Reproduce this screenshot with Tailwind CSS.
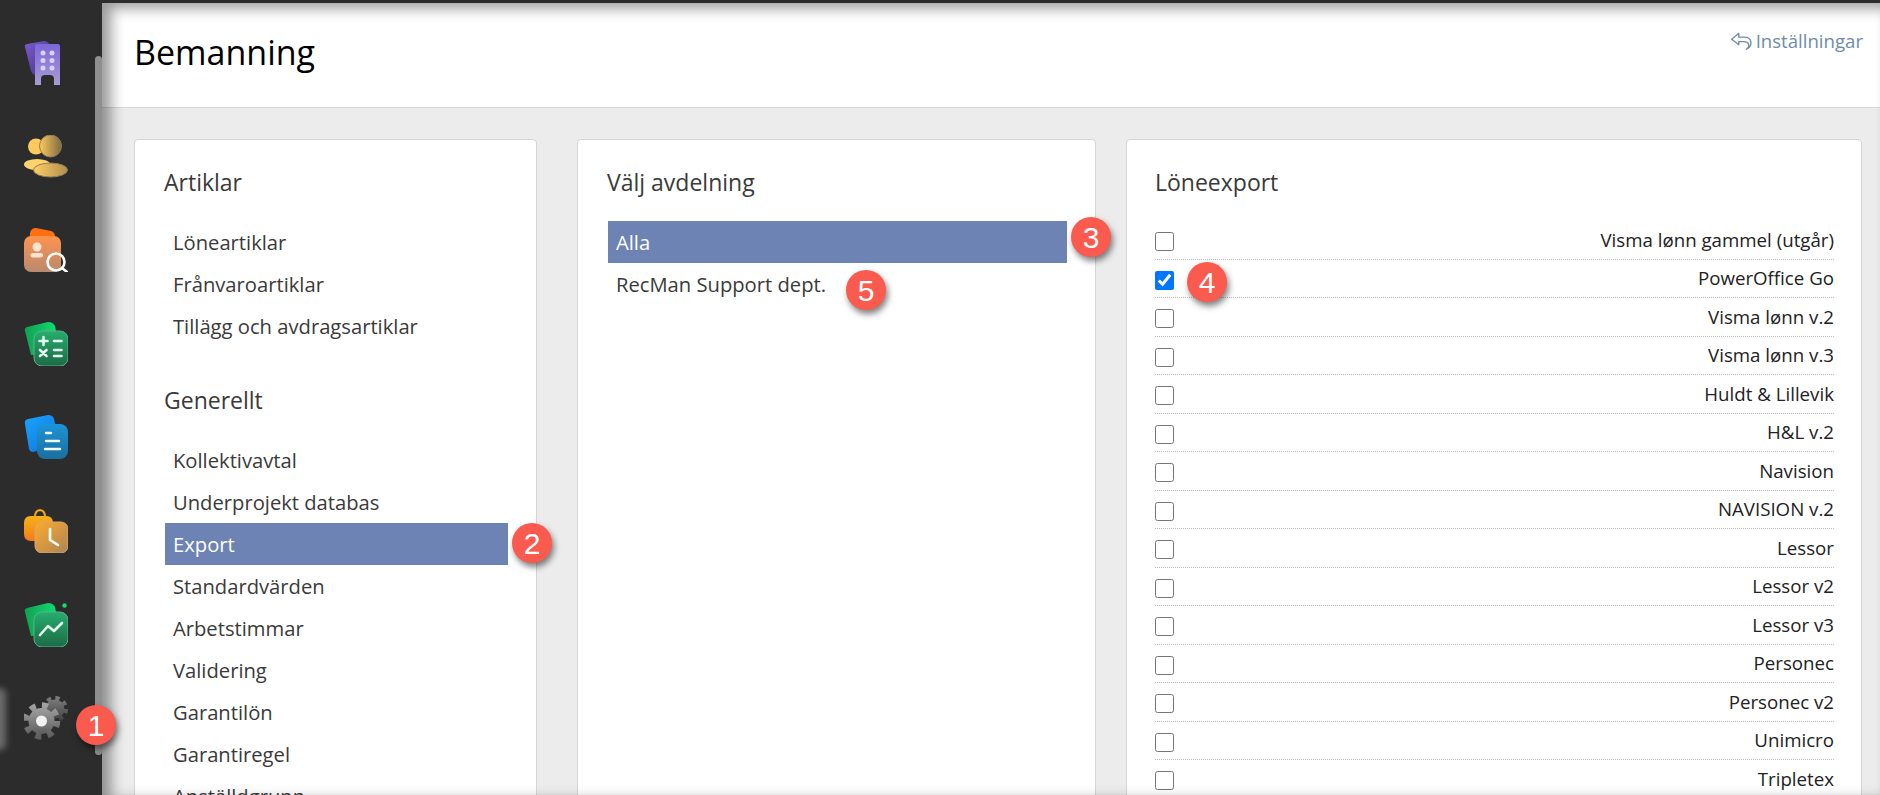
<!DOCTYPE html>
<html lang="sv">
<head>
    <meta charset="UTF-8" />
    <title>Bemanning</title>
    <script src="https://cdn.jsdelivr.net/npm/@tailwindcss/browser@4"></script>
</head>
<body class="h-[795px] overflow-hidden bg-[#2c2c2c] [font-family:'Open_Sans',sans-serif] text-[#3a3a3a]">

<!-- shared gradients for the sidebar icons -->
<svg width="0" height="0" class="absolute">
    <defs>
        <linearGradient id="purpleBack" x1="0" y1="0" x2="1" y2="1"><stop offset="0" stop-color="#7a5cd0"/><stop offset="1" stop-color="#43307f"/></linearGradient>
        <linearGradient id="purpleFront" x1="0" y1="0" x2="0" y2="1"><stop offset="0" stop-color="#7c68d6"/><stop offset="1" stop-color="#a99bd6"/></linearGradient>
        <linearGradient id="coin" x1="0" y1="0" x2="1" y2="0"><stop offset="0" stop-color="#ffc95c"/><stop offset="1" stop-color="#7d6a45"/></linearGradient>
        <linearGradient id="coinFlat" x1="0" y1="0" x2="1" y2="0"><stop offset="0" stop-color="#ffce66"/><stop offset="1" stop-color="#b08f4e"/></linearGradient>
        <linearGradient id="orangeFront" x1="0" y1="0" x2="0" y2="1"><stop offset="0" stop-color="#ff934d"/><stop offset="1" stop-color="#b98a70"/></linearGradient>
        <linearGradient id="greenBack" x1="0" y1="0" x2="1" y2="0"><stop offset="0" stop-color="#12a050"/><stop offset="1" stop-color="#0ae676"/></linearGradient>
        <linearGradient id="greenFront" x1="0" y1="0" x2="0" y2="1"><stop offset="0" stop-color="#27ad6e"/><stop offset="1" stop-color="#1c6b46"/></linearGradient>
        <linearGradient id="blueBack" x1="0" y1="0" x2="1" y2="1"><stop offset="0" stop-color="#1aa5ff"/><stop offset="1" stop-color="#0f6fd8"/></linearGradient>
        <linearGradient id="blueFront" x1="0" y1="0" x2="0" y2="1"><stop offset="0" stop-color="#1c94d8"/><stop offset="1" stop-color="#1a6f9e"/></linearGradient>
        <linearGradient id="bagBack" x1="0" y1="0" x2="0" y2="1"><stop offset="0" stop-color="#f7b216"/><stop offset="1" stop-color="#f57a1a"/></linearGradient>
        <linearGradient id="bagFront" x1="0" y1="0" x2="1" y2="1"><stop offset="0" stop-color="#ffaa2c"/><stop offset="1" stop-color="#ab8559"/></linearGradient>
        <linearGradient id="gearBack" x1="0" y1="0" x2="0" y2="1"><stop offset="0" stop-color="#7a7a7a"/><stop offset="1" stop-color="#454545"/></linearGradient>
        <linearGradient id="gearFront" x1="0" y1="0" x2="0" y2="1"><stop offset="0" stop-color="#a0a0a0"/><stop offset="1" stop-color="#5e5e5e"/></linearGradient>
    </defs>
</svg>

<div class="flex h-full">

    <!-- Sidebar -->
    <aside class="relative w-[102px] shrink-0 bg-[#2c2c2c]">
        <div class="flex flex-col gap-[49.6px] pl-6 pt-[41px]">
            <svg class="w-11 h-11" viewBox="0 0 44 44">
                <path d="M1 6 Q0 4 3 3 L20 0 Q24 0 25 3 L27 26 L11 34 Q8 33 7 30 Z" fill="url(#purpleBack)"/>
                <path d="M11 5 Q11 3 13 3 L34 3 Q36 3 36 5 L36 44 L30 44 L30 38 Q30 34 26 34 L21 34 Q17 34 17 38 L17 44 L11 44 Z" fill="url(#purpleFront)"/>
                <g fill="#d9d2f5"><circle cx="19" cy="12" r="2.5"/><circle cx="28" cy="12" r="2.5"/><circle cx="19" cy="19.5" r="2.5"/><circle cx="28" cy="19.5" r="2.5"/><circle cx="19" cy="27" r="2.5"/><circle cx="28" cy="27" r="2.5"/></g>
            </svg>
            <svg class="w-11 h-11" viewBox="0 0 44 44">
                <circle cx="12" cy="11.5" r="8" fill="#ffc95c"/>
                <circle cx="26.5" cy="11" r="11" fill="url(#coin)" stroke="#8f7d59" stroke-width="1"/>
                <ellipse cx="13" cy="29.5" rx="13" ry="5.5" fill="#ffd26c"/>
                <ellipse cx="26.5" cy="35" rx="17" ry="7" fill="url(#coinFlat)" stroke="#8f7d59" stroke-width="1"/>
            </svg>
            <svg class="w-11 h-11" viewBox="0 0 44 44">
                <path d="M6 5 Q7 0 12 0 L27 3 Q31 4 31 9 L6 9 Z" fill="#ff6f0f"/>
                <rect x="0" y="8" width="37" height="36" rx="7" fill="url(#orangeFront)"/>
                <circle cx="13" cy="19" r="4.5" fill="#ffe3d2"/>
                <rect x="6.5" y="25" width="12.5" height="4.5" rx="2.2" fill="#ffe3d2"/>
                <circle cx="32" cy="34" r="8.5" fill="none" stroke="#fff" stroke-width="2.6"/>
                <path d="M38 40 L43 44" stroke="#fff" stroke-width="2.6" stroke-linecap="round"/>
            </svg>
            <svg class="w-11 h-11" viewBox="0 0 44 44">
                <path d="M1 9 Q0 6 3 5 L24 0 Q29 0 31 4 L36 30 L7 33 Z" fill="url(#greenBack)"/>
                <rect x="10" y="9" width="34" height="35" rx="8" fill="url(#greenFront)" stroke="#5fae8b" stroke-width="1"/>
                <g stroke="#e5f7ee" stroke-width="2.6" stroke-linecap="round">
                    <path d="M15.5 19 H23.5 M19.5 15 V23"/>
                    <path d="M30 19 H37.5"/>
                    <path d="M16 28 L22.5 34 M22.5 28 L16 34"/>
                    <path d="M30 28 H37.5 M30 34 H37.5"/>
                </g>
            </svg>
            <svg class="w-11 h-11" viewBox="0 0 44 44">
                <path d="M1 9 Q0 5 4 4 L24 0 Q29 0 30 4 L36 30 L9 37 Q6 37 5 34 Z" fill="url(#blueBack)"/>
                <rect x="13" y="9" width="31" height="35" rx="8" fill="url(#blueFront)"/>
                <g stroke="#f2fbff" stroke-width="2.4" stroke-linecap="round">
                    <path d="M22 18 H27"/>
                    <path d="M22 26 H35"/>
                    <path d="M21 34 H36"/>
                </g>
            </svg>
            <svg class="w-11 h-11" viewBox="0 0 44 44">
                <path d="M11 8 Q11 1.5 16 1 Q21 1.5 21 8" fill="none" stroke="#f0a818" stroke-width="2"/>
                <path d="M0 14 Q0 7 7 7 L22 7 Q29 7 29 14 L30 32 L7 32 Q0 32 0 25 Z" fill="url(#bagBack)"/>
                <rect x="11" y="13" width="33" height="31" rx="7" fill="url(#bagFront)" stroke="#d0a878" stroke-width="1"/>
                <path d="M26 20 V31 L34 36" fill="none" stroke="#fff" stroke-width="2.6" stroke-linecap="round" stroke-linejoin="round"/>
            </svg>
            <svg class="w-11 h-11" viewBox="0 0 44 44">
                <path d="M1 9 Q0 6 3 5 L24 0 Q29 0 31 4 L36 30 L7 33 Z" fill="url(#greenBack)"/>
                <circle cx="40.5" cy="2.5" r="2.2" fill="#0ee06f"/>
                <rect x="10" y="9" width="34" height="35" rx="8" fill="url(#greenFront)" stroke="#5fae8b" stroke-width="1"/>
                <path d="M16 32 L24 23 L30 28 L38 20" fill="none" stroke="#e5f7ee" stroke-width="2.6" stroke-linecap="round" stroke-linejoin="round"/>
            </svg>
            <svg class="w-11 h-11" viewBox="0 0 44 44">
                <circle cx="31" cy="13" r="9.5" fill="url(#gearBack)"/>
                <circle cx="31" cy="13" r="10.5" fill="none" stroke="url(#gearBack)" stroke-width="5" stroke-dasharray="4.1 4.15"/>
                <circle cx="17.5" cy="25" r="13" fill="url(#gearFront)"/>
                <circle cx="17.5" cy="25" r="15.5" fill="none" stroke="url(#gearFront)" stroke-width="6.5" stroke-dasharray="6 6.17"/>
                <circle cx="17.5" cy="25" r="5.5" fill="#f2f2f2"/>
            </svg>
        </div>

        <!-- scrollbar thumb and hover glow -->
        <div class="absolute left-[95px] top-[56px] h-[699px] w-[7px] rounded-t-md rounded-b-md bg-[#8f8f8f]"></div>
        <div class="absolute left-[-12px] top-[688px] h-[62px] w-[18px] rounded-md bg-[#6a6a6a] blur-[3px]"></div>
    </aside>

    <!-- Main -->
    <main class="relative flex-1 min-w-0 bg-[#ececec] border-t-[3px] border-[#2c2c2c]">
        <header class="flex h-[105px] justify-between border-b border-[#d8d8d8] bg-white pl-8 pr-[17px]">
            <h1 class="pt-[27px] text-[34px] leading-[44px] text-black">Bemanning</h1>
            <a class="flex h-[76px] items-center gap-1 text-[18.6px] text-[#6f8ba8]">
                <svg class="w-[22px] h-[22px]" viewBox="0 0 20 20" fill="none" stroke="#6f8ba8" stroke-width="1.2" stroke-linejoin="round" stroke-linecap="round">
                    <path d="M8 3 L1.5 8.5 L8 13.5 V10.5 H12.5 Q16 10.5 17 13 Q17.5 15.5 15 17.5 Q19.5 15.5 19 11 Q18.5 6.5 13 6.5 H8 Z"/>
                </svg>
                Inställningar
            </a>
        </header>

        <div class="flex items-start gap-10 pl-8 pt-[31px]">

            <!-- Artiklar / Generellt -->
            <section class="w-[403px] shrink-0 rounded border border-[#d5d5d5] bg-white pl-[29px] pr-[27px] pt-[28px] pb-10">
                <h2 class="mb-[25px] text-[23px] leading-[28px]">Artiklar</h2>
                <ul class="mx-[1px] text-[20.2px]">
                    <li class="flex h-[42px] items-center px-2">Löneartiklar</li>
                    <li class="flex h-[42px] items-center px-2">Frånvaroartiklar</li>
                    <li class="flex h-[42px] items-center px-2">Tillägg och avdragsartiklar</li>
                </ul>
                <h2 class="mb-[25px] mt-[39px] text-[23px] leading-[28px]">Generellt</h2>
                <ul class="mx-[1px] text-[20.2px]">
                    <li class="flex h-[42px] items-center px-2">Kollektivavtal</li>
                    <li class="flex h-[42px] items-center px-2">Underprojekt databas</li>
                    <li class="flex h-[42px] items-center bg-[#6d83b4] px-2 text-white">Export</li>
                    <li class="flex h-[42px] items-center px-2">Standardvärden</li>
                    <li class="flex h-[42px] items-center px-2">Arbetstimmar</li>
                    <li class="flex h-[42px] items-center px-2">Validering</li>
                    <li class="flex h-[42px] items-center px-2">Garantilön</li>
                    <li class="flex h-[42px] items-center px-2">Garantiregel</li>
                    <li class="flex h-[42px] items-center px-2">Anställdgrupp</li>
                </ul>
            </section>

            <!-- Välj avdelning -->
            <section class="w-[519px] shrink-0 h-[800px] rounded border border-[#d5d5d5] bg-white pl-[29px] pr-[28px] pt-[28px]">
                <h2 class="mb-[25px] text-[23px] leading-[28px]">Välj avdelning</h2>
                <ul class="ml-[1px] text-[20.2px]">
                    <li class="flex h-[42px] items-center bg-[#6d83b4] px-2 text-white">Alla</li>
                    <li class="flex h-[42px] items-center px-2">RecMan Support dept.</li>
                </ul>
            </section>

            <!-- Löneexport -->
            <section class="ml-[-10px] w-[736px] shrink-0 h-[800px] rounded border border-[#d5d5d5] bg-white pl-[28px] pr-[27px] pt-[28px]">
                <h2 class="mb-[25px] text-[23px] leading-[28px]">Löneexport</h2>
                <ul class="text-[18.7px] text-[#222]">
                    <li class="flex h-[38.5px] items-center justify-between border-b border-dotted border-[#bbb]"><input type="checkbox" class="mt-1 h-[19px] w-[19px]">Visma lønn gammel (utgår)</li>
                    <li class="flex h-[38.5px] items-center justify-between border-b border-dotted border-[#bbb]"><input type="checkbox" checked class="mt-1 h-[19px] w-[19px]">PowerOffice Go</li>
                    <li class="flex h-[38.5px] items-center justify-between border-b border-dotted border-[#bbb]"><input type="checkbox" class="mt-1 h-[19px] w-[19px]">Visma lønn v.2</li>
                    <li class="flex h-[38.5px] items-center justify-between border-b border-dotted border-[#bbb]"><input type="checkbox" class="mt-1 h-[19px] w-[19px]">Visma lønn v.3</li>
                    <li class="flex h-[38.5px] items-center justify-between border-b border-dotted border-[#bbb]"><input type="checkbox" class="mt-1 h-[19px] w-[19px]">Huldt &amp; Lillevik</li>
                    <li class="flex h-[38.5px] items-center justify-between border-b border-dotted border-[#bbb]"><input type="checkbox" class="mt-1 h-[19px] w-[19px]">H&amp;L v.2</li>
                    <li class="flex h-[38.5px] items-center justify-between border-b border-dotted border-[#bbb]"><input type="checkbox" class="mt-1 h-[19px] w-[19px]">Navision</li>
                    <li class="flex h-[38.5px] items-center justify-between border-b border-dotted border-[#bbb]"><input type="checkbox" class="mt-1 h-[19px] w-[19px]">NAVISION v.2</li>
                    <li class="flex h-[38.5px] items-center justify-between border-b border-dotted border-[#bbb]"><input type="checkbox" class="mt-1 h-[19px] w-[19px]">Lessor</li>
                    <li class="flex h-[38.5px] items-center justify-between border-b border-dotted border-[#bbb]"><input type="checkbox" class="mt-1 h-[19px] w-[19px]">Lessor v2</li>
                    <li class="flex h-[38.5px] items-center justify-between border-b border-dotted border-[#bbb]"><input type="checkbox" class="mt-1 h-[19px] w-[19px]">Lessor v3</li>
                    <li class="flex h-[38.5px] items-center justify-between border-b border-dotted border-[#bbb]"><input type="checkbox" class="mt-1 h-[19px] w-[19px]">Personec</li>
                    <li class="flex h-[38.5px] items-center justify-between border-b border-dotted border-[#bbb]"><input type="checkbox" class="mt-1 h-[19px] w-[19px]">Personec v2</li>
                    <li class="flex h-[38.5px] items-center justify-between border-b border-dotted border-[#bbb]"><input type="checkbox" class="mt-1 h-[19px] w-[19px]">Unimicro</li>
                    <li class="flex h-[38.5px] items-center justify-between border-b border-dotted border-[#bbb]"><input type="checkbox" class="mt-1 h-[19px] w-[19px]">Tripletex</li>
                </ul>
            </section>
        </div>

        <!-- shadow cast by the sidebar and the top bar -->
        <div class="pointer-events-none absolute inset-0 shadow-[inset_9px_5px_14px_rgba(0,0,0,0.4)]"></div>
    </main>
</div>

<!-- numbered annotation badges, drawn on top of the screenshot -->
<div class="absolute left-[76px] top-[705px] flex h-10 w-10 items-center justify-center rounded-full bg-[#fb5a4e] [font-family:'Liberation_Sans',sans-serif] text-[30px] text-white shadow-[2px_4px_6px_rgba(0,0,0,0.5)]">1</div>
<div class="absolute left-[512px] top-[523px] flex h-10 w-10 items-center justify-center rounded-full bg-[#fb5a4e] [font-family:'Liberation_Sans',sans-serif] text-[30px] text-white shadow-[2px_4px_6px_rgba(0,0,0,0.5)]">2</div>
<div class="absolute left-[1071px] top-[217px] flex h-10 w-10 items-center justify-center rounded-full bg-[#fb5a4e] [font-family:'Liberation_Sans',sans-serif] text-[30px] text-white shadow-[2px_4px_6px_rgba(0,0,0,0.5)]">3</div>
<div class="absolute left-[1187px] top-[262px] flex h-10 w-10 items-center justify-center rounded-full bg-[#fb5a4e] [font-family:'Liberation_Sans',sans-serif] text-[30px] text-white shadow-[2px_4px_6px_rgba(0,0,0,0.5)]">4</div>
<div class="absolute left-[846px] top-[270px] flex h-10 w-10 items-center justify-center rounded-full bg-[#fb5a4e] [font-family:'Liberation_Sans',sans-serif] text-[30px] text-white shadow-[2px_4px_6px_rgba(0,0,0,0.5)]">5</div>

</body>
</html>
